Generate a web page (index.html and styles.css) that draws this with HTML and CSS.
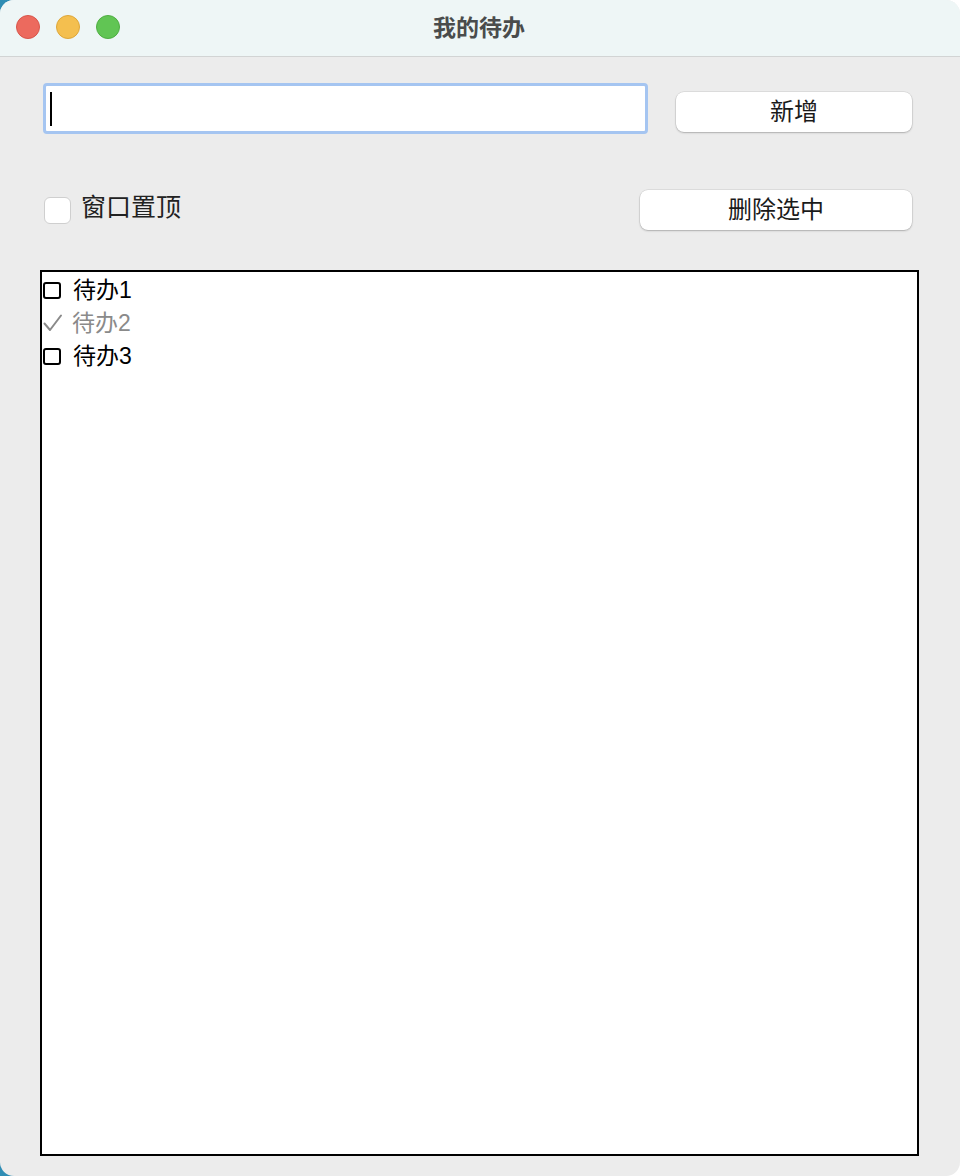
FILE: index.html
```html
<!DOCTYPE html>
<html lang="zh-CN">
  <head>
    <meta charset="utf-8" />
    <title>我的待办</title>
    <link rel="stylesheet" href="styles.css">
  </head>

  <body>
    <div class="window">
      <div class="titlebar">
        <div class="lights">
          <span class="light red"></span>
          <span class="light yellow"></span>
          <span class="light green"></span>
        </div>
        <div class="title">我的待办</div>
      </div>

      <div class="content">
        <div class="entry-row">
          <div class="field"><span class="caret"></span></div>
          <button class="btn btn-add">新增</button>
        </div>

        <div class="option-row">
          <label class="pin">
            <span class="checkbox"></span>
            <span>窗口置顶</span>
          </label>
          <button class="btn btn-delete">删除选中</button>
        </div>

        <ul class="todo-list">
          <li class="todo"><span class="box"></span>待办1</li>
          <li class="todo done">
            <svg class="tick" width="20" height="18" viewBox="0 0 20 18">
              <polyline points="1.5,9.5 7,16 18,1.5" fill="none" stroke="#8a8a8a" stroke-width="2" stroke-linecap="round" stroke-linejoin="round" />
            </svg>待办2
          </li>
          <li class="todo"><span class="box"></span>待办3</li>
        </ul>
      </div>
    </div>
  </body>
</html>
```

FILE: styles.css
```css
body {
  margin: 0;
  background: linear-gradient(to right, #2f8db4 0%, #5aa9c8 40%, #f2f6f7 70%, #ffffff 100%);
  font-family: "Liberation Sans", "Noto Sans CJK SC", sans-serif;
}

.window {
  width: 960px;
  height: 1176px;
  display: flex;
  flex-direction: column;
  background-color: #ececec;
  border-radius: 14px;
  overflow: hidden;
}

.titlebar {
  height: 57px;
  flex: none;
  box-sizing: border-box;
  position: relative;
  background-color: #eef6f6;
  border-bottom: 1px solid #d2d4d4;
  display: flex;
  align-items: center;
  justify-content: center;
  padding-bottom: 5px;
}

.lights {
  position: absolute;
  left: 16px;
  top: 15px;
  display: flex;
  gap: 16px;
}

.light {
  width: 24px;
  height: 24px;
  border-radius: 50%;
  box-sizing: border-box;
}

.red {
  background-color: #ec6a5e;
  border: 1px solid #d8564b;
}

.yellow {
  background-color: #f4bf4f;
  border: 1px solid #dea73a;
}

.green {
  background-color: #61c554;
  border: 1px solid #4fae42;
}

.title {
  font-size: 23px;
  font-weight: bold;
  color: #4a4c4c;
  margin-left: -2px;
}

.content {
  flex: 1;
  display: flex;
  flex-direction: column;
  padding: 26px 41px 20px 40px;
  min-height: 0;
}

.entry-row {
  display: flex;
  align-items: flex-start;
  padding: 0 7px 0 3px;
}

.field {
  width: 605px;
  height: 51px;
  box-sizing: border-box;
  background-color: #fff;
  border: 3px solid #a5c5f1;
  border-radius: 4px;
  display: flex;
  align-items: center;
  padding-left: 4px;
}

.caret {
  width: 2px;
  height: 34px;
  background-color: #000;
}

.btn {
  background-color: #fff;
  border: none;
  border-radius: 8px;
  box-shadow: 0 0 0 0.5px rgba(0, 0, 0, 0.12), 0 1px 2px rgba(0, 0, 0, 0.22);
  font-family: "Liberation Sans", "Noto Sans CJK SC", sans-serif;
  font-size: 24px;
  line-height: 1;
  color: #1a1a1a;
  height: 40px;
  padding: 0 0 1px 0;
}

.btn-add {
  width: 236px;
  margin-left: 28px;
  margin-top: 9px;
}

.option-row {
  display: flex;
  justify-content: space-between;
  align-items: center;
  margin-top: 56px;
  padding: 0 7px 0 4px;
}

.pin {
  display: flex;
  align-items: center;
  font-size: 25px;
  line-height: 1;
  color: #222;
}

.pin span:last-child {
  margin-top: -5px;
}

.checkbox {
  width: 27px;
  height: 27px;
  box-sizing: border-box;
  background-color: #fff;
  border: 1px solid #cfcfcf;
  border-radius: 6px;
  margin-right: 10px;
}

.btn-delete {
  width: 272px;
}

.todo-list {
  list-style: none;
  flex: 1;
  margin: 40px 0 0 0;
  padding: 2px 0 0 1px;
  background-color: #fff;
  border: 2px solid #000;
}

.todo {
  display: flex;
  align-items: center;
  height: 33px;
  box-sizing: border-box;
  padding-bottom: 5px;
  font-size: 23px;
  color: #000;
}

.box {
  width: 18px;
  height: 17px;
  box-sizing: border-box;
  border: 2px solid #000;
  border-radius: 3px;
  margin-right: 12px;
  margin-top: 4px;
}

.tick {
  margin-right: 9px;
  margin-top: 4px;
}

.done {
  color: #8a8a8a;
}
```
